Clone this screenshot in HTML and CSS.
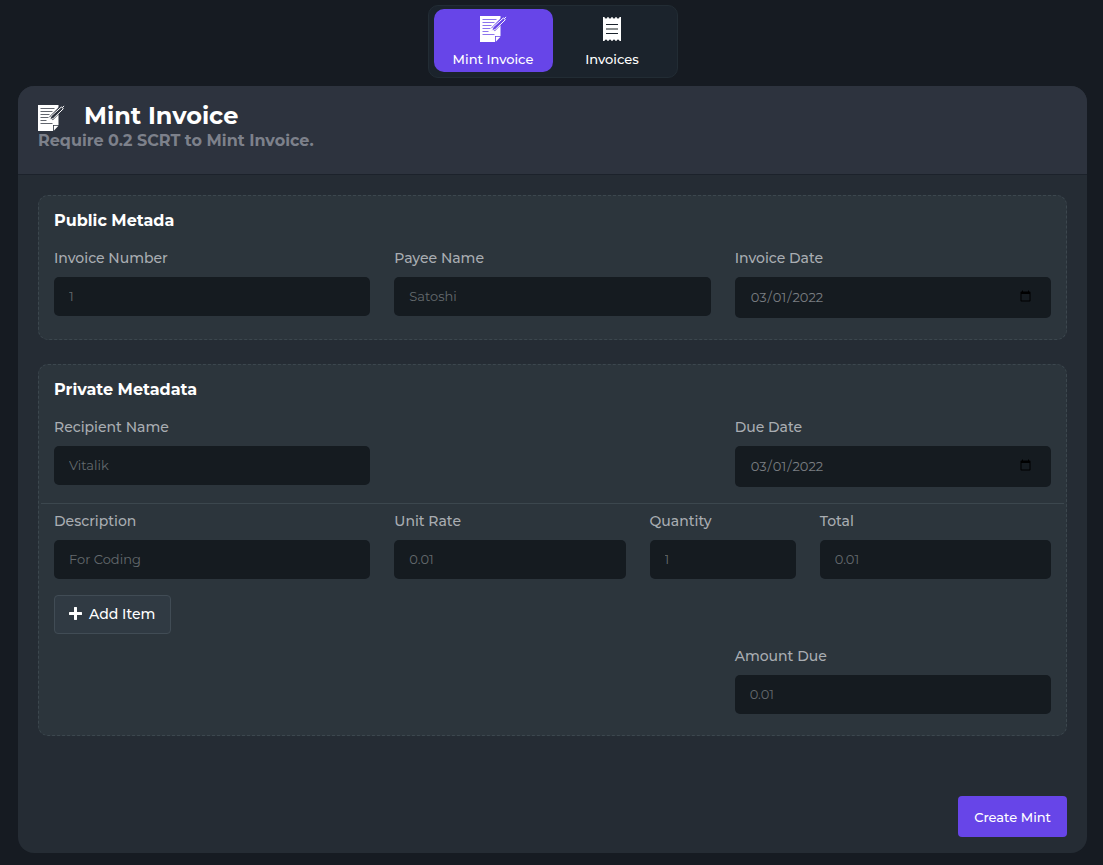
FILE: index.html
```
<!DOCTYPE html>
<html lang="en">
  <head>
    <meta charset="UTF-8" />
    <meta name="viewport" content="width=device-width, initial-scale=1.0" />
    <title>Mint Invoice</title>
    <link rel="stylesheet" href="styles.css">
  </head>

  <body>
    <!-- Shared icon shapes -->
    <svg class="icon-defs" aria-hidden="true">
      <symbol id="icon-note" viewBox="0 0 27 26">
        <path fill="#fff" d="M0 0h20.500v20H15v6H0z" />
        <path class="note-line" d="M2.500 3.500h14M2.500 6.500h12M2.500 9.500h9M2.500 12.500h8M2.500 15.500h6M2.500 18.500h12" />
        <path class="note-cut" d="M13 13.500 24 2.500" />
        <path fill="#fff" d="M15.800 20.800h4.700l-4.700 4.900z" />
        <path class="pen" d="m11.600 15 1.500-3.900L23.500 1.900l1.800 1.900L15.200 13.500zM24.300 2.700l1.700-1.800" />
      </symbol>
      <symbol id="icon-receipt" viewBox="0 0 18 24">
        <path fill="#fff" d="M0 0h1.500a1.500 1.500 0 0 0 3 0h1a1.500 1.500 0 0 0 3 0h1a1.500 1.500 0 0 0 3 0h1a1.500 1.500 0 0 0 3 0H18v24h-1.500a1.500 1.500 0 0 0-3 0h-1a1.500 1.500 0 0 0-3 0h-1a1.500 1.500 0 0 0-3 0h-1a1.500 1.500 0 0 0-3 0H0z" />
        <path stroke="#1b232c" stroke-width="1" d="M3 7.500h12M3 16.500h12" />
        <path stroke="#8b8f90" stroke-width="2" d="M3 12h12" />
      </symbol>
    </svg>

    <nav class="tabs">
      <button type="button" class="tab active">
        <svg class="icon-note" aria-hidden="true"><use href="#icon-note" /></svg>
        <span>Mint Invoice</span>
      </button>
      <button type="button" class="tab">
        <svg class="icon-receipt" aria-hidden="true"><use href="#icon-receipt" /></svg>
        <span>Invoices</span>
      </button>
    </nav>

    <main class="card">
      <header class="card-header">
        <div class="card-title">
          <svg class="icon-note" aria-hidden="true"><use href="#icon-note" /></svg>
          <h1>Mint Invoice</h1>
        </div>
        <p class="card-subtitle">Require 0.2 SCRT to Mint Invoice.</p>
      </header>

      <form class="card-body">
        <section class="panel">
          <div class="panel-part">
            <h2>Public Metada</h2>
            <div class="row">
              <div class="field col-4">
                <label for="invoiceNumber">Invoice Number</label>
                <input type="text" id="invoiceNumber" placeholder="1" />
              </div>
              <div class="field col-4">
                <label for="payeeName">Payee Name</label>
                <input type="text" id="payeeName" placeholder="Satoshi" />
              </div>
              <div class="field col-4">
                <label for="invoiceDate">Invoice Date</label>
                <input type="date" id="invoiceDate" value="2022-03-01" />
              </div>
            </div>
          </div>
        </section>

        <section class="panel">
          <div class="panel-part">
            <h2>Private Metadata</h2>
            <div class="row">
              <div class="field col-4">
                <label for="recipientName">Recipient Name</label>
                <input type="text" id="recipientName" placeholder="Vitalik" />
              </div>
              <div class="field col-4 col-last">
                <label for="dueDate">Due Date</label>
                <input type="date" id="dueDate" value="2022-03-01" />
              </div>
            </div>
          </div>

          <div class="panel-part items">
            <div class="row">
              <div class="field col-4">
                <label for="description">Description</label>
                <input type="text" id="description" placeholder="For Coding" />
              </div>
              <div class="field col-3">
                <label for="unitRate">Unit Rate</label>
                <input type="text" id="unitRate" placeholder="0.01" />
              </div>
              <div class="field col-2">
                <label for="quantity">Quantity</label>
                <input type="text" id="quantity" placeholder="1" />
              </div>
              <div class="field col-3">
                <label for="total">Total</label>
                <input type="text" id="total" placeholder="0.01" />
              </div>
            </div>

            <button type="button" class="add-btn">
              <svg class="icon-plus" viewBox="0 0 13 13" aria-hidden="true"><path d="M6.500 1v11M1 6.500h11" /></svg>
              Add Item
            </button>

            <div class="row">
              <div class="field col-4 col-last">
                <label for="amountDue">Amount Due</label>
                <input type="text" id="amountDue" placeholder="0.01" />
              </div>
            </div>
          </div>
        </section>

        <div class="actions">
          <button type="submit" class="create-btn">Create Mint</button>
        </div>
      </form>
    </main>
  </body>
</html>
```

FILE: styles.css
```
* {
  margin: 0;
  padding: 0;
  box-sizing: border-box;
}

body {
  font-family: Montserrat, Inter, sans-serif;
  font-size: 14px;
  line-height: 20px;
  color: #fff;
  background-color: #161b22;
  min-height: 100vh;
  padding: 5px 16px 12px 18px;
}

button,
input {
  font: inherit;
  color: inherit;
}

button {
  border: none;
  cursor: pointer;
}

.icon-defs {
  position: absolute;
  width: 0;
  height: 0;
}

.icon-note {
  width: 27px;
  height: 26px;
  color: #6745e8;
}

.icon-receipt {
  width: 18px;
  height: 24px;
  margin: 1px 0;
}

.note-line {
  fill: none;
  stroke: currentColor;
  stroke-width: 1;
  opacity: 0.75;
}

.note-cut {
  fill: none;
  stroke: currentColor;
  stroke-width: 5;
}

.pen {
  fill: currentColor;
  stroke: #fff;
  stroke-width: 1;
}

/* Tabs */
.tabs {
  display: flex;
  width: fit-content;
  margin: 0 auto 8px;
  padding: 3px 5px 5px;
  background-color: #1b232c;
  border: 1px solid #222c34;
  border-radius: 10px;
}

.tab {
  display: flex;
  flex-direction: column;
  align-items: center;
  gap: 6px;
  min-width: 119px;
  padding: 7px 8px 2px;
  font-size: 13px;
  font-weight: 500;
  line-height: 22px;
  background: none;
  border-radius: 10px;
}

.tab.active {
  background-color: #6745e8;
}

/* Card */
.card {
  background-color: #252c34;
  border-radius: 16px;
  overflow: hidden;
}

.card-header {
  padding: 19px 20px 23px;
  background-color: #2d333e;
  border-bottom: 1px solid #1c222b;
}

.card-title {
  display: flex;
  align-items: flex-start;
  gap: 19px;
}

.card-title .icon-note {
  color: #2d333e;
}

.card-title h1 {
  font-size: 24px;
  font-weight: 700;
  line-height: 22px;
}

.card-subtitle {
  font-size: 16px;
  font-weight: 700;
  color: #7d818b;
}

.card-body {
  padding: 20px 20px 16px;
}

/* Panels */
.panel {
  margin-bottom: 24px;
  background-color: #2c353c;
  border: 1px dashed #3c474e;
  border-radius: 10px;
}

.panel-part {
  padding: 12px 15px 21px;
}

.panel-part:not(:last-child) {
  padding-bottom: 16px;
}

.panel-part.items {
  margin: 0 2px;
  padding: 7px 13px 21px;
  border-top: 1px solid #3c474e;
}

.panel h2 {
  margin-bottom: 14px;
  font-size: 16px;
  font-weight: 700;
  line-height: 26px;
}

.row {
  display: grid;
  grid-template-columns: repeat(12, 1fr);
  align-items: start;
  column-gap: 24px;
}

.col-2 {
  grid-column: span 2;
}

.col-3 {
  grid-column: span 3;
}

.col-4 {
  grid-column: span 4;
}

.col-last {
  grid-column: 9 / span 4;
}

.field label {
  display: block;
  margin-bottom: 9px;
  font-weight: 500;
  color: #a9adb2;
}

.field input {
  display: block;
  width: 100%;
  height: 39px;
  padding: 0 15px 2px;
  font-size: 13px;
  font-weight: 400;
  color: #7b7f83;
  background-color: #151b20;
  border: none;
  border-radius: 5px;
  outline: none;
}

.field input[type="date"] {
  height: 41px;
  padding-right: 17px;
}

.field input::placeholder {
  color: #646a6e;
}

.field input:focus {
  box-shadow: 0 0 0 1px #6745e8;
}

/* Buttons */
.add-btn {
  display: flex;
  align-items: center;
  gap: 7px;
  height: 39px;
  margin: 16px 0 12px;
  padding: 0 15px 2px 14px;
  font-size: 14px;
  font-weight: 500;
  background-color: #303a43;
  border: 1px solid #414c55;
  border-radius: 4px;
}

.icon-plus {
  width: 13px;
  height: 13px;
  fill: none;
  stroke: #fff;
  stroke-width: 3;
  stroke-linecap: round;
}

.actions {
  display: flex;
  justify-content: flex-end;
  margin-top: 60px;
}

.create-btn {
  height: 41px;
  padding: 0 16px;
  font-size: 13px;
  font-weight: 500;
  background-color: #6745e8;
  border-radius: 4px;
}

.create-btn:hover,
.tab.active:hover {
  background-color: #7455ee;
}
```
